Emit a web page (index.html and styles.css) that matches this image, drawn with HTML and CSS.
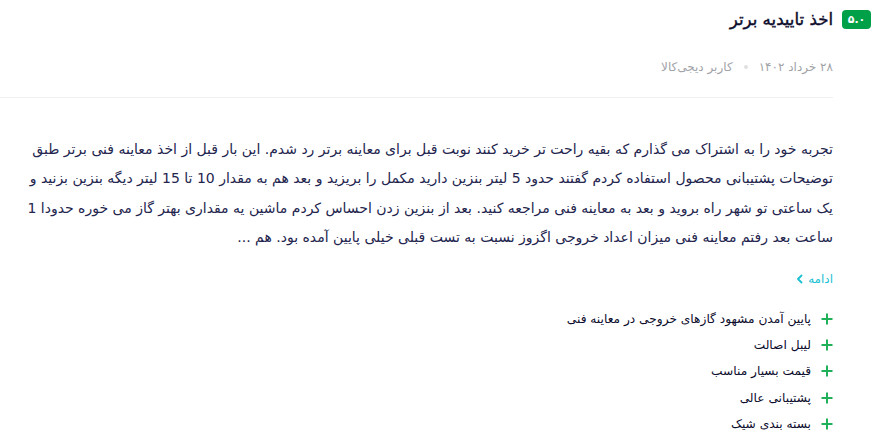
FILE: index.html
```html
<!DOCTYPE html>
<html lang="fa" dir="rtl">
<head>
<meta charset="utf-8">
<title>نظر کاربر</title>
<link rel="stylesheet" href="styles.css">
</head>
<body>
<article class="review">
  <div class="rating-col"><span class="badge">۵.۰</span></div>
  <div class="content">
    <h3 class="title">اخذ تاییدیه برتر</h3>
    <div class="meta">
      <span>۲۸ خرداد ۱۴۰۲</span>
      <span class="dot"></span>
      <span>کاربر دیجی‌کالا</span>
    </div>
    <p class="text">تجربه خود را به اشتراک می گذارم که بقیه راحت تر خرید کنند نوبت قبل برای معاینه برتر رد شدم. این بار قبل از اخذ معاینه فنی برتر طبق توضیحات پشتیبانی محصول استفاده کردم گفتند حدود 5 لیتر بنزین دارید مکمل را بریزید و بعد هم به مقدار 10 تا 15 لیتر دیگه بنزین بزنید و یک ساعتی تو شهر راه بروید و بعد به معاینه فنی مراجعه کنید. بعد از بنزین زدن احساس کردم ماشین یه مقداری بهتر گاز می خوره حدودا 1 ساعت بعد رفتم معاینه فنی میزان اعداد خروجی اگزوز نسبت به تست قبلی خیلی پایین آمده بود. هم ...</p>
    <a class="more" href="#">ادامه <svg width="8" height="10" viewBox="0 0 8 10"><path d="M5.5 1.5 L2 5 L5.5 8.5" fill="none" stroke="currentColor" stroke-width="1.8" stroke-linecap="round" stroke-linejoin="round"/></svg></a>
    <ul class="pros">
      <li><svg class="plus" width="12" height="12" viewBox="0 0 12 12"><path d="M6 0.5V11.5M0.5 6H11.5" stroke="currentColor" stroke-width="2"/></svg><span>پایین آمدن مشهود گازهای خروجی در معاینه فنی</span></li>
      <li><svg class="plus" width="12" height="12" viewBox="0 0 12 12"><path d="M6 0.5V11.5M0.5 6H11.5" stroke="currentColor" stroke-width="2"/></svg><span>لیبل اصالت</span></li>
      <li><svg class="plus" width="12" height="12" viewBox="0 0 12 12"><path d="M6 0.5V11.5M0.5 6H11.5" stroke="currentColor" stroke-width="2"/></svg><span>قیمت بسیار مناسب</span></li>
      <li><svg class="plus" width="12" height="12" viewBox="0 0 12 12"><path d="M6 0.5V11.5M0.5 6H11.5" stroke="currentColor" stroke-width="2"/></svg><span>پشتیبانی عالی</span></li>
      <li><svg class="plus" width="12" height="12" viewBox="0 0 12 12"><path d="M6 0.5V11.5M0.5 6H11.5" stroke="currentColor" stroke-width="2"/></svg><span>بسته بندی شیک</span></li>
    </ul>
  </div>
</article>
</body>
</html>
```

FILE: styles.css
```css
html, body {
  margin: 0;
  padding: 0;
  background: #ffffff;
}
body {
  font-family: "DejaVu Sans", "Noto Sans", sans-serif;
  color: #23254e;
}
.review {
  display: flex;
  flex-direction: row;
  gap: 9px;
  padding: 10px 10px 0 0;
}
.rating-col {
  flex: 0 0 29px;
}
.badge {
  display: flex;
  align-items: center;
  justify-content: center;
  width: 29px;
  height: 19px;
  border-radius: 4px;
  background: #00a049;
  color: #fff;
  font-size: 11px;
  font-weight: bold;
}
.content {
  flex: 1;
  min-width: 0;
}
.title {
  margin: 0;
  font-size: 16.6px;
  line-height: 19px;
  font-weight: normal;
  color: #0c0c2c;
  -webkit-text-stroke: 0.4px #0c0c2c;
}
.meta {
  display: flex;
  align-items: center;
  gap: 11px;
  margin-top: 29px;
  font-size: 12px;
  line-height: 18px;
  color: #a1a3a8;
  padding-bottom: 21px;
  border-bottom: 1px solid #f0f0f1;
}
.dot {
  width: 4px;
  height: 4px;
  border-radius: 50%;
  background: #e0e0e2;
}
.text {
  margin: 37px 0 0 12px;
  font-size: 14px;
  line-height: 29.4px;
  color: #23254e;
}
.more {
  display: inline-flex;
  align-items: center;
  gap: 4px;
  margin-top: 17px;
  font-size: 12px;
  line-height: 18px;
  color: #19bfd3;
  text-decoration: none;
}
.pros {
  list-style: none;
  margin: 18px 0 0;
  padding: 0;
}
.pros li {
  display: flex;
  align-items: center;
  gap: 10px;
  height: 26.25px;
  font-size: 12.2px;
  color: #0c0c2c;
}
.plus {
  color: #21b05a;
  flex: 0 0 12px;
}
```
